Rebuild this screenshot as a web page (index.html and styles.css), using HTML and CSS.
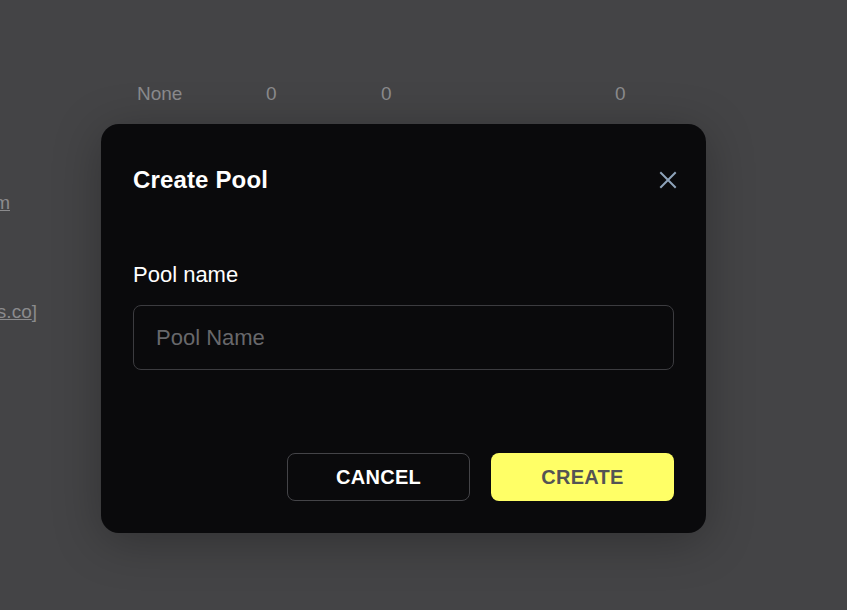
FILE: index.html
```html
<!DOCTYPE html>
<html lang="en">
<head>
<meta charset="utf-8">
<title>Create Pool</title>
<link rel="stylesheet" href="styles.css">
</head>
<body>
<main class="page">
  <div class="table-row">
    <span class="cell">None</span>
    <span class="cell">0</span>
    <span class="cell">0</span>
    <span class="cell">0</span>
  </div>
  <div class="link-line link-one"><a class="link" href="#">www.pools.com</a></div>
  <div class="link-line link-two"><span>[<a class="link" href="#">support@pools.co</a>]</span></div>
</main>

<div class="modal" role="dialog" aria-labelledby="modal-title">
  <div class="modal-header">
    <h2 id="modal-title" class="modal-title">Create Pool</h2>
    <button class="close-btn" aria-label="Close">
      <svg width="18" height="18" viewBox="0 0 18 18" fill="none" stroke="currentColor" stroke-width="2" stroke-linecap="square">
        <path d="M2 2 L16 16 M16 2 L2 16"/>
      </svg>
    </button>
  </div>
  <label class="field-label" for="pool-name">Pool name</label>
  <input id="pool-name" class="field-input" type="text" placeholder="Pool Name">
  <div class="modal-actions">
    <button class="btn btn-cancel">CANCEL</button>
    <button class="btn btn-create">CREATE</button>
  </div>
</div>
</body>
</html>
```

FILE: styles.css
```css
* { box-sizing: border-box; }

html, body {
  margin: 0;
  padding: 0;
  height: 100%;
}

body {
  background: #444446;
  font-family: "Liberation Sans", Arial, sans-serif;
  overflow: hidden;
}

.page {
  padding-top: 82px;
  color: #8b8b8d;
  font-size: 19px;
  line-height: 24px;
}

.table-row {
  display: grid;
  grid-template-columns: 129px 115px 234px auto;
  padding-left: 137px;
}

.link-line {
  display: flex;
  justify-content: flex-end;
  overflow: hidden;
  white-space: nowrap;
}

.link-one {
  width: 10px;
  margin-top: 85px;
}

.link-two {
  width: 37px;
  margin-top: 85px;
}

.link {
  color: #8b8b8d;
  text-decoration: underline;
}

.modal {
  position: absolute;
  left: 101px;
  top: 124px;
  width: 605px;
  height: 409px;
  background: #0a0a0c;
  border-radius: 18px;
  padding: 42px 32px 32px;
  box-shadow: 0 8px 48px rgba(0, 0, 0, 0.28);
  display: flex;
  flex-direction: column;
}

.modal-header {
  display: flex;
  align-items: center;
  justify-content: space-between;
  height: 28px;
}

.modal-title {
  margin: 0;
  font-size: 24px;
  line-height: 28px;
  font-weight: 700;
  color: #ffffff;
  letter-spacing: 0.15px;
}

.close-btn {
  background: none;
  border: 0;
  padding: 0;
  margin-right: -3px;
  margin-top: -1px;
  width: 18px;
  height: 18px;
  color: #8ea3ba;
  display: flex;
  cursor: pointer;
}

.field-label {
  display: block;
  margin-top: 67px;
  font-size: 22px;
  line-height: 28px;
  color: #ffffff;
}

.field-input {
  margin-top: 16px;
  height: 65px;
  width: 100%;
  background: #0a0a0c;
  border: 1px solid #3c3c40;
  border-radius: 8px;
  padding: 0 22px;
  font-family: "Liberation Sans", Arial, sans-serif;
  font-size: 22px;
  color: #ffffff;
  outline: none;
}

.field-input::placeholder {
  color: #68686b;
}

.modal-actions {
  margin-top: auto;
  display: flex;
  justify-content: flex-end;
  gap: 21px;
}

.btn {
  width: 183px;
  height: 48px;
  border-radius: 8px;
  font-family: "Liberation Sans", Arial, sans-serif;
  font-size: 20px;
  font-weight: 700;
  letter-spacing: 0.3px;
  cursor: pointer;
}

.btn-cancel {
  background: #0a0a0c;
  border: 1px solid #444448;
  color: #ffffff;
}

.btn-create {
  background: #ffff66;
  border: 0;
  color: #545454;
}
```
